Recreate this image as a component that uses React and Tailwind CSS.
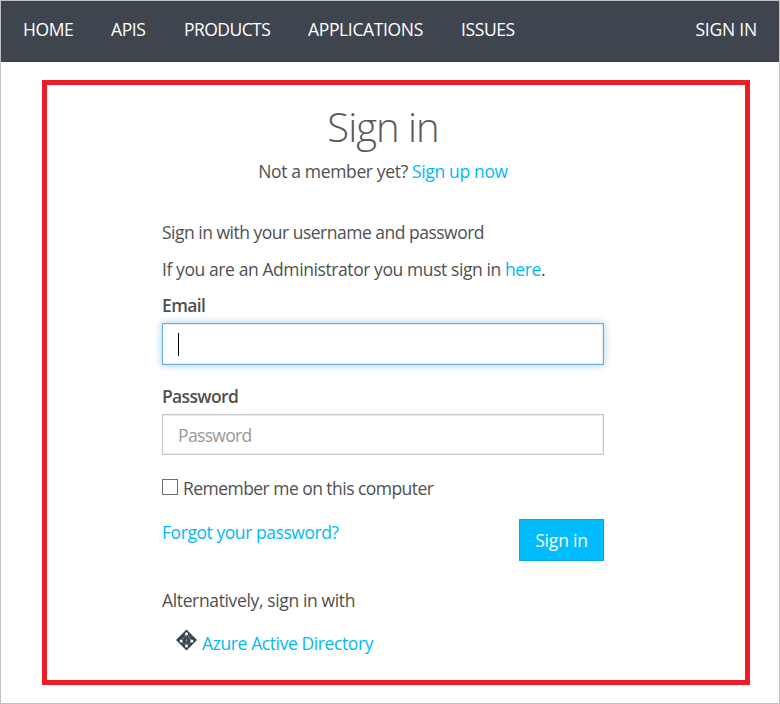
import React from 'react';

const navItems = [
  { label: 'HOME', cls: 'w-[87px] tracking-[-0.4px]' },
  { label: 'APIS', cls: 'w-[73px] pl-px tracking-[-0.4px]' },
  { label: 'PRODUCTS', cls: 'w-[124px] pl-px tracking-[-0.55px]' },
  { label: 'APPLICATIONS', cls: 'w-[153px] pl-px tracking-[-0.35px]' },
  { label: 'ISSUES', cls: 'pl-px tracking-[-0.4px]' },
];

function DirectoryIcon() {
  return (
    <svg width="22" height="22" viewBox="0 0 22 22" className="block shrink-0">
      <path d="M10.5 0.5 21 11 10.5 21.5 0 11Z" fill="#3a424e" />
      <path d="M10.5 4.5 5.3 12 10.5 17 15.7 12Z" fill="none" stroke="#858c95" strokeWidth="0.9" />
      <path d="M10.5 4.5V17" fill="none" stroke="#68707b" strokeWidth="0.8" />
      <circle cx="10.5" cy="4.7" r="1.5" fill="#fff" />
      <circle cx="5.2" cy="12" r="1.5" fill="#fff" />
      <circle cx="15.8" cy="12" r="1.5" fill="#fff" />
      <circle cx="10.5" cy="17" r="1.5" fill="#fff" />
      <circle cx="10.5" cy="11.5" r="1" fill="#858c95" />
    </svg>
  );
}

export default function App() {
  return (
    <div className="flex h-[704px] w-[780px] flex-col border border-[#c0c0c0] bg-white font-['Open_Sans','Noto_Sans',sans-serif] text-[17.5px] leading-6 whitespace-nowrap text-[#505050]">
      <nav className="flex h-[61px] shrink-0 border-b border-[#3c3c49] bg-[#3f454f] pt-4 pr-[22px] pl-[22px] text-white">
        {navItems.map((item) => (
          <a key={item.label} className={item.cls}>{item.label}</a>
        ))}
        <a className="ml-auto tracking-[-0.2px]">SIGN IN</a>
      </nav>
      <main className="mt-[18px] ml-[41px] h-[605px] w-[708px] border-[5px] border-[#ed1c24] pl-[115px]">
        <div className="flex w-[442px] flex-col">
          <h1 className="mt-[16px] h-[55px] text-center text-[40px] leading-[52px] font-light tracking-[-1px] text-[#5a5a5a]">Sign in</h1>
          <p className="mt-[3px] text-center tracking-[-0.35px]">
            Not a member yet? <a className="text-[#00b9f9]">Sign up now</a>
          </p>
          <p className="mt-[37px] tracking-[-0.5px]">Sign in with your username and password</p>
          <p className="mt-[13px] tracking-[-0.41px]">
            If you are an Administrator you must sign in <a className="text-[#00b9f9]">here</a>.
          </p>
          <label className="mt-[12px] font-semibold tracking-[-0.6px]">Email</label>
          <div className="mt-[6px] flex h-[42px] items-center border border-[#66afe9] pl-[15px] shadow-[inset_0_1px_1px_rgba(0,0,0,0.08),inset_-1px_-1px_1px_rgba(0,0,0,0.08),0_0_8px_rgba(102,175,233,0.6)]">
            <span className="h-[23px] w-px bg-black" />
          </div>
          <label className="mt-[19px] font-semibold tracking-[-0.65px]">Password</label>
          <div className="mt-[6px] h-[41px] border border-[#c8c8c8] pt-[8px] pl-[15px] tracking-[-0.65px] text-[#999] shadow-[inset_0_1px_1px_rgba(0,0,0,0.08),inset_-1px_-1px_1px_rgba(0,0,0,0.06)]">
            Password
          </div>
          <label className="mt-[21px] flex tracking-[-0.54px]">
            <span className="mt-[3px] mr-[5px] h-4 w-4 border border-[#707070]" />
            <span>Remember me on this computer</span>
          </label>
          <div className="mt-[19px] flex h-[42px] justify-between">
            <a className="mt-px tracking-[-0.44px] text-[#00b9f9]">Forgot your password?</a>
            <button className="flex h-[42px] w-[85px] justify-center border border-[#00a8e0] bg-[#00bcff] pt-[8px] tracking-[-0.2px] text-white">Sign in</button>
          </div>
          <p className="mt-[27px] tracking-[-0.36px]">Alternatively, sign in with</p>
          <div className="mt-[17px] flex pl-[14px]">
            <DirectoryIcon />
            <a className="mt-[2px] ml-[4px] tracking-[-0.4px] text-[#00b9f9]">Azure Active Directory</a>
          </div>
        </div>
      </main>
    </div>
  );
}
